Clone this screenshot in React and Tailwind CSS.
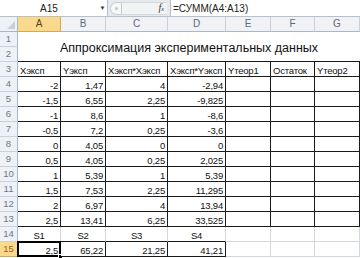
import React from 'react';

const font = { fontFamily: '"Liberation Sans", Arial, sans-serif' };

const letters = ['A', 'B', 'C', 'D', 'E', 'F', 'G'];

const data = [
  ['-2', '1,47', '4', '-2,94'],
  ['-1,5', '6,55', '2,25', '-9,825'],
  ['-1', '8,6', '1', '-8,6'],
  ['-0,5', '7,2', '0,25', '-3,6'],
  ['0', '4,05', '0', '0'],
  ['0,5', '4,05', '0,25', '2,025'],
  ['1', '5,39', '1', '5,39'],
  ['1,5', '7,53', '2,25', '11,295'],
  ['2', '6,97', '4', '13,94'],
  ['2,5', '13,41', '6,25', '33,525'],
];

// which cells carry the black table border
const boxed = (r, c) => c >= 0 && c <= 6 && ((r >= 3 && r <= 13) || (r === 15 && c <= 3));

function cellText(r, c) {
  if (r === 3) return ['Xэксп', 'Yэксп', 'Xэксп*Xэксп', 'Xэксп*Yэксп', 'Yтеор1', 'Остаток', 'Yтеор2'][c];
  if (r >= 4 && r <= 13) return data[r - 4][c] || '';
  if (r === 14) return ['S1', 'S2', 'S3', 'S4'][c] || '';
  if (r === 15) return ['2,5', '65,22', '21,25', '41,21'][c] || '';
  return '';
}

function Cell({ r, c }) {
  const right = boxed(r, c) || boxed(r, c + 1) ? 'border-r-[#1a1a1a]' : 'border-r-[#d4d7dc]';
  const bottom = boxed(r, c) || boxed(r + 1, c) ? 'border-b-[#1a1a1a]' : 'border-b-[#d4d7dc]';
  const align = r === 3 ? 'justify-start pl-[2px]' : r === 14 ? 'justify-center' : 'justify-end pr-[2px]';
  const selected = r === 15 && c === 0;
  return (
    <div className={`relative flex items-end pb-[1px] border-r border-b whitespace-nowrap text-[9.5px] tracking-[-0.2px] leading-none text-[#111] bg-white ${right} ${bottom} ${align}`}>
      {cellText(r, c)}
      {selected && (
        <>
          <div className="absolute left-[-1px] top-[-1px] right-[-1px] bottom-[-1px] border-2 border-black" />
          <div className="absolute right-[-3px] bottom-[-3px] w-[5px] h-[5px] bg-black border border-white" />
        </>
      )}
    </div>
  );
}

function RowHead({ r }) {
  const sel = r === 15;
  return (
    <div
      className={`col-start-1 flex items-center justify-center border-b border-r text-[9.5px] leading-none ${
        sel ? 'bg-[#f9d98d] text-[#9a6416] border-b-[#d9a84a] border-r-[#d9a84a]' : 'bg-[#eef1f5] text-[#6b7a8f] border-b-[#c9d2dc] border-r-[#a9b6c4]'
      }`}
    >
      {r}
    </div>
  );
}

export default function App() {
  const rows = [];
  for (let r = 3; r <= 15; r++) rows.push(r);

  return (
    <div className="w-[360px] h-[258px] overflow-hidden bg-white" style={font}>
      {/* formula bar */}
      <div className="h-[17px] flex items-stretch bg-[#e6eaef] border-b border-[#b7c0ca]">
        <div className="w-[98px] bg-white flex items-center justify-center text-[10px] text-[#222]">A15</div>
        <div className="w-[10px] bg-white flex items-center justify-center text-[6px] text-[#333] border-r border-[#b7c0ca]">▼</div>
        <div className="flex-1 flex items-center pl-[2px] pr-[3px]">
          <div className="w-[12px] h-[13px] rounded-l-full bg-[#f5f6f8] border border-[#c6ccd3] flex items-center justify-center">
            <div className="w-[3px] h-[3px] rounded-full bg-[#c1c7ce]" />
          </div>
          <div className="flex-1 h-[13px] bg-[#f1f3f5] border-y border-[#d3d8de] flex items-center justify-end pr-[3px]">
            <span className="italic text-[10px] text-[#333] leading-none" style={{ fontFamily: '"Liberation Serif", serif' }}>
              f<span className="text-[6px]">x</span>
            </span>
          </div>
        </div>
        <div className="w-[190px] bg-white border-l border-[#b7c0ca] flex items-center pl-[2px] text-[10px] text-[#222]">
          =СУММ(A4:A13)
        </div>
      </div>

      {/* sheet */}
      <div className="grid grid-cols-[18px_43px_45px_62px_58px_45px_44px_1fr] auto-rows-[15px]">
        {/* column headers */}
        <div className="relative bg-[#eef1f5] border-r border-b border-[#a9b6c4]">
          <div className="absolute right-[2px] bottom-[2px] w-0 h-0 border-l-[8px] border-l-transparent border-b-[8px] border-b-[#c8d0da]" />
        </div>
        {letters.map((l, i) => (
          <div
            key={l}
            className={`flex items-center justify-center text-[10px] leading-none border-r border-b ${
              i === 0
                ? 'bg-[#f9d98d] text-[#5a4216] border-r-[#d9a84a] border-b-[#d9a84a]'
                : 'bg-[#f0f2f5] text-[#5d6b7e] border-r-[#c9d2dc] border-b-[#a9b6c4]'
            }`}
          >
            {l}
          </div>
        ))}

        {/* title rows 1-2 (merged A1:G2) */}
        <RowHead r={1} />
        <div className="col-start-2 col-span-7 row-span-2 bg-white border-b border-b-[#1a1a1a] flex items-center justify-center pt-[4px] text-[12.5px] text-[#111] whitespace-nowrap">
          Аппроксимация экспериментальных данных
        </div>
        <RowHead r={2} />

        {rows.map((r) => (
          <React.Fragment key={r}>
            <RowHead r={r} />
            {[0, 1, 2, 3, 4, 5, 6].map((c) => (
              <Cell key={c} r={r} c={c} />
            ))}
          </React.Fragment>
        ))}
      </div>
    </div>
  );
}
